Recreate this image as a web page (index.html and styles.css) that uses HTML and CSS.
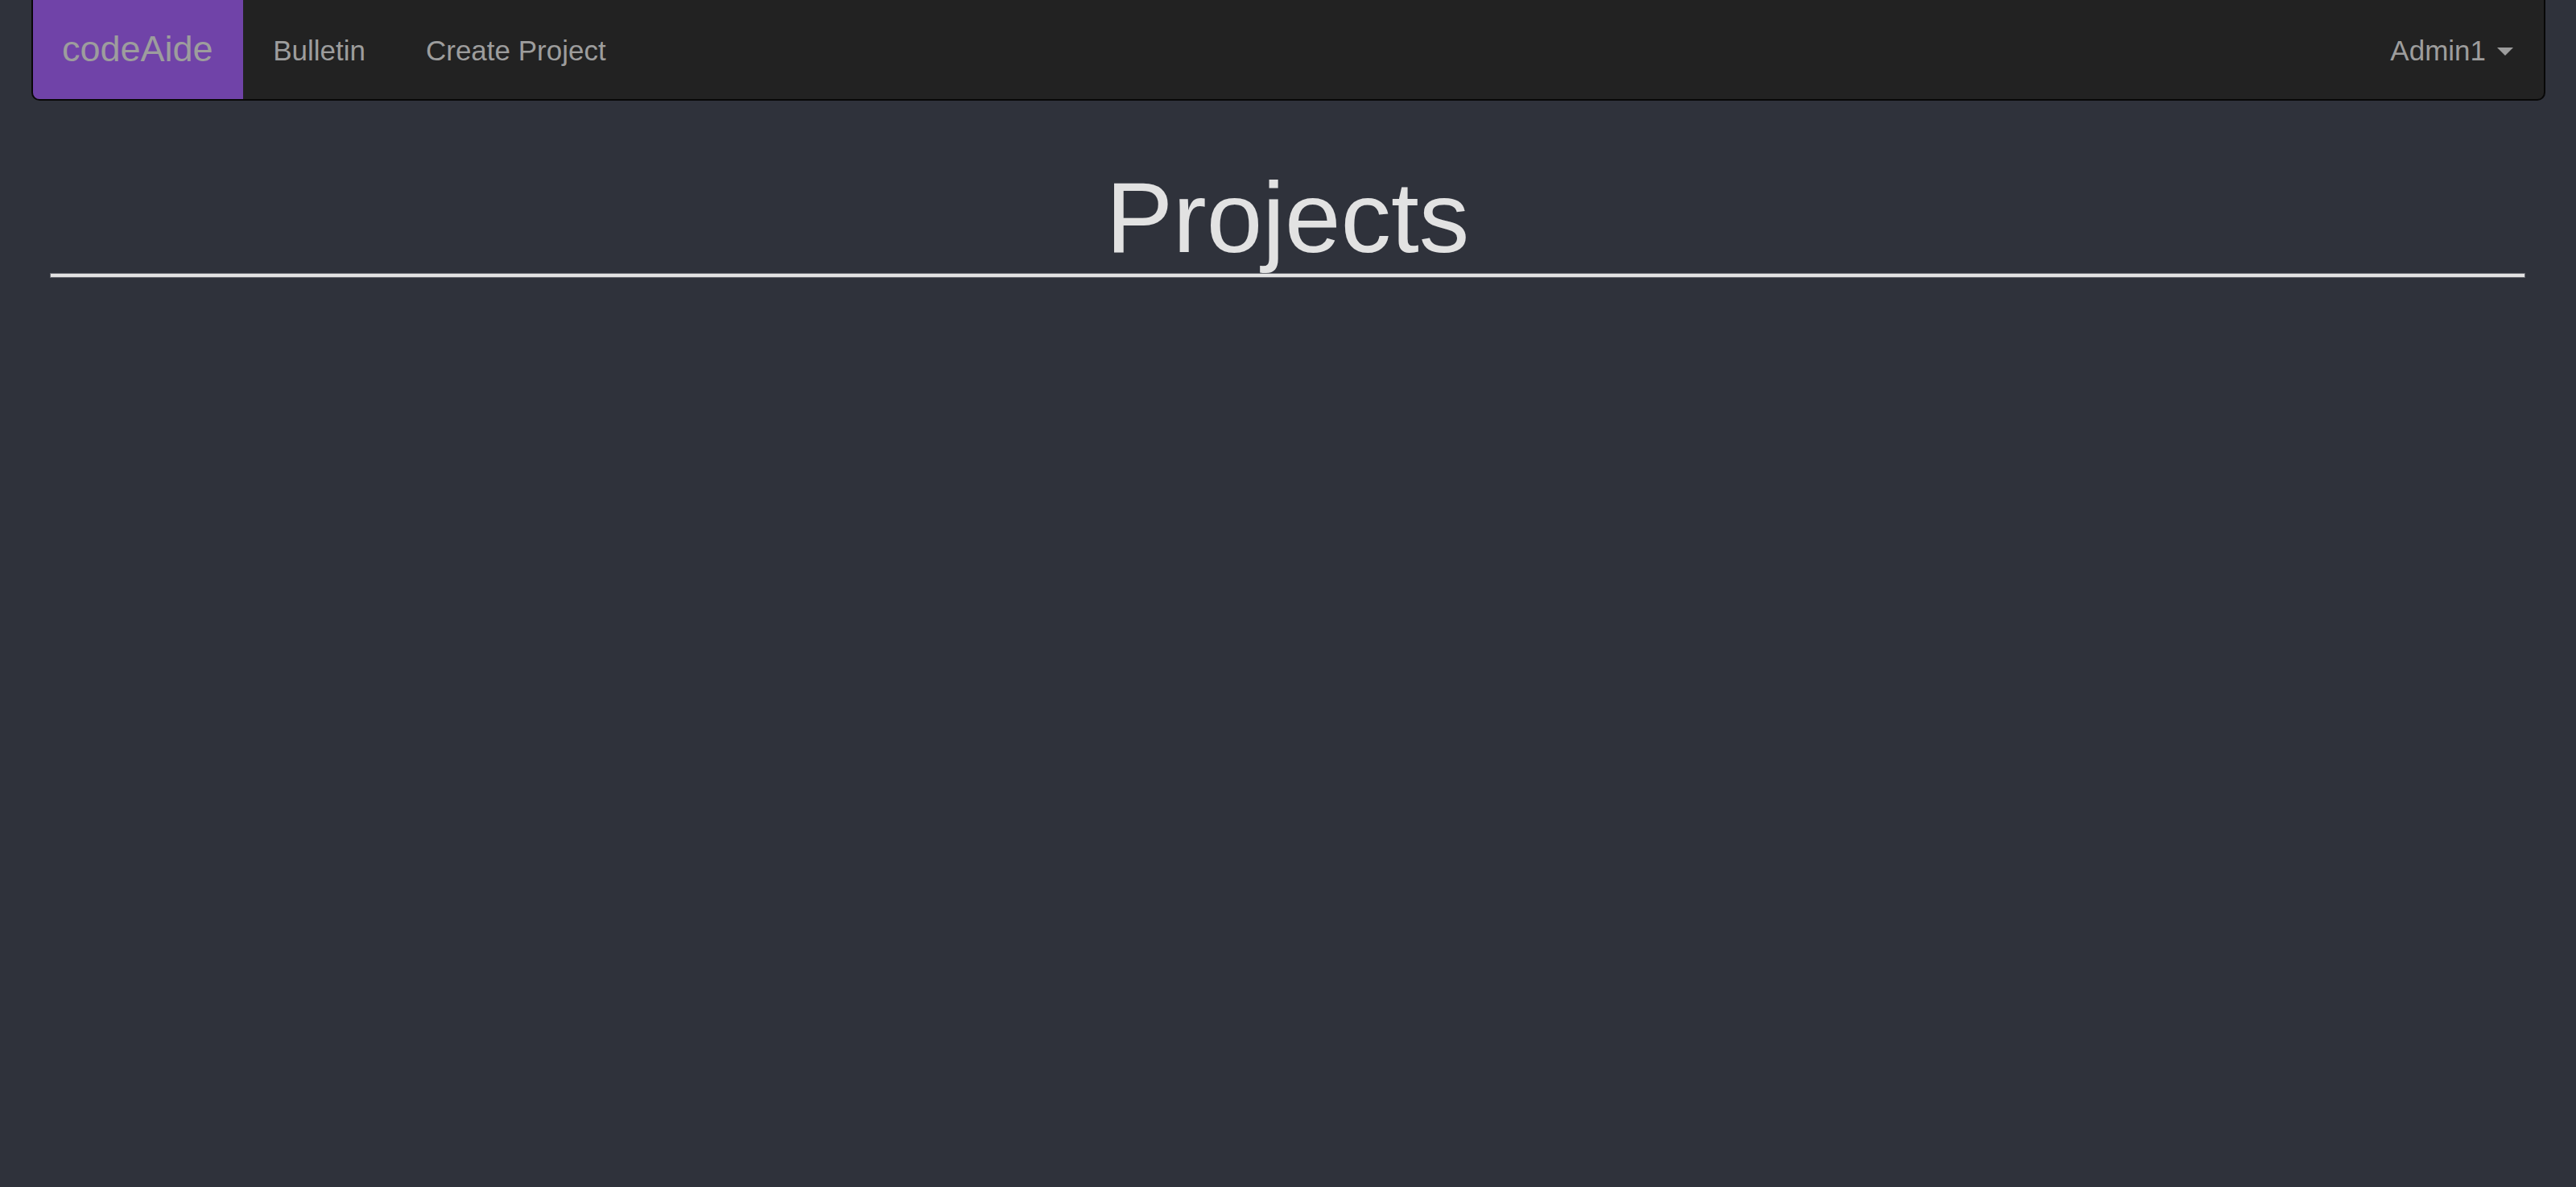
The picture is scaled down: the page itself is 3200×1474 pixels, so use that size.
FILE: index.html
```html
<!DOCTYPE html>
<html lang="en">
<head>
<meta charset="utf-8">
<title>codeAide - Projects</title>
<link rel="stylesheet" href="styles.css">
</head>
<body>
<nav class="navbar">
  <div class="nav-left">
    <a class="brand" href="#">codeAide</a>
    <a class="nav-link" href="#">Bulletin</a>
    <a class="nav-link" href="#">Create Project</a>
  </div>
  <div class="nav-right">
    <a class="nav-link dropdown" href="#">Admin1<span class="caret"></span></a>
  </div>
</nav>
<main class="page">
  <h1 class="title">Projects</h1>
  <div class="rule"></div>
</main>
</body>
</html>
```

FILE: styles.css
```css
html, body {
  margin: 0;
  padding: 0;
  background: #2f323b;
  font-family: "Liberation Sans", Arial, sans-serif;
}

.navbar {
  margin: 0 38px 0 39px;
  height: 123px;
  background: #222222;
  border: 2px solid #080808;
  border-top: none;
  border-radius: 0 0 10px 10px;
  display: flex;
  justify-content: space-between;
  align-items: stretch;
  overflow: hidden;
}

.nav-left, .nav-right {
  display: flex;
  align-items: stretch;
}

.brand {
  display: block;
  background: #7043a8;
  color: #9d9d9d;
  text-decoration: none;
  font-size: 45px;
  line-height: 50px;
  padding: 36px 37px 37px 37px;
  margin-left: -1px;
}

.nav-link {
  display: block;
  color: #9d9d9d;
  text-decoration: none;
  font-size: 35px;
  line-height: 50px;
  padding: 38px 37.5px 35px 37.5px;
}

.dropdown {
  padding-right: 38px;
}

.caret {
  display: inline-block;
  width: 0;
  height: 0;
  margin-left: 14px;
  vertical-align: middle;
  border-top: 10px solid #9d9d9d;
  border-left: 10px solid transparent;
  border-right: 10px solid transparent;
  position: relative;
  top: -2px;
}

.page {
  padding: 0 63px 0 62px;
}

.title {
  margin: 76px 0 0 0;
  text-align: center;
  font-size: 125px;
  line-height: 137.5px;
  font-weight: normal;
  color: #e2e2e2;
}

.rule {
  height: 4px;
  background: #e3e3e3;
  border: 1px solid #6b6d74;
}
```
